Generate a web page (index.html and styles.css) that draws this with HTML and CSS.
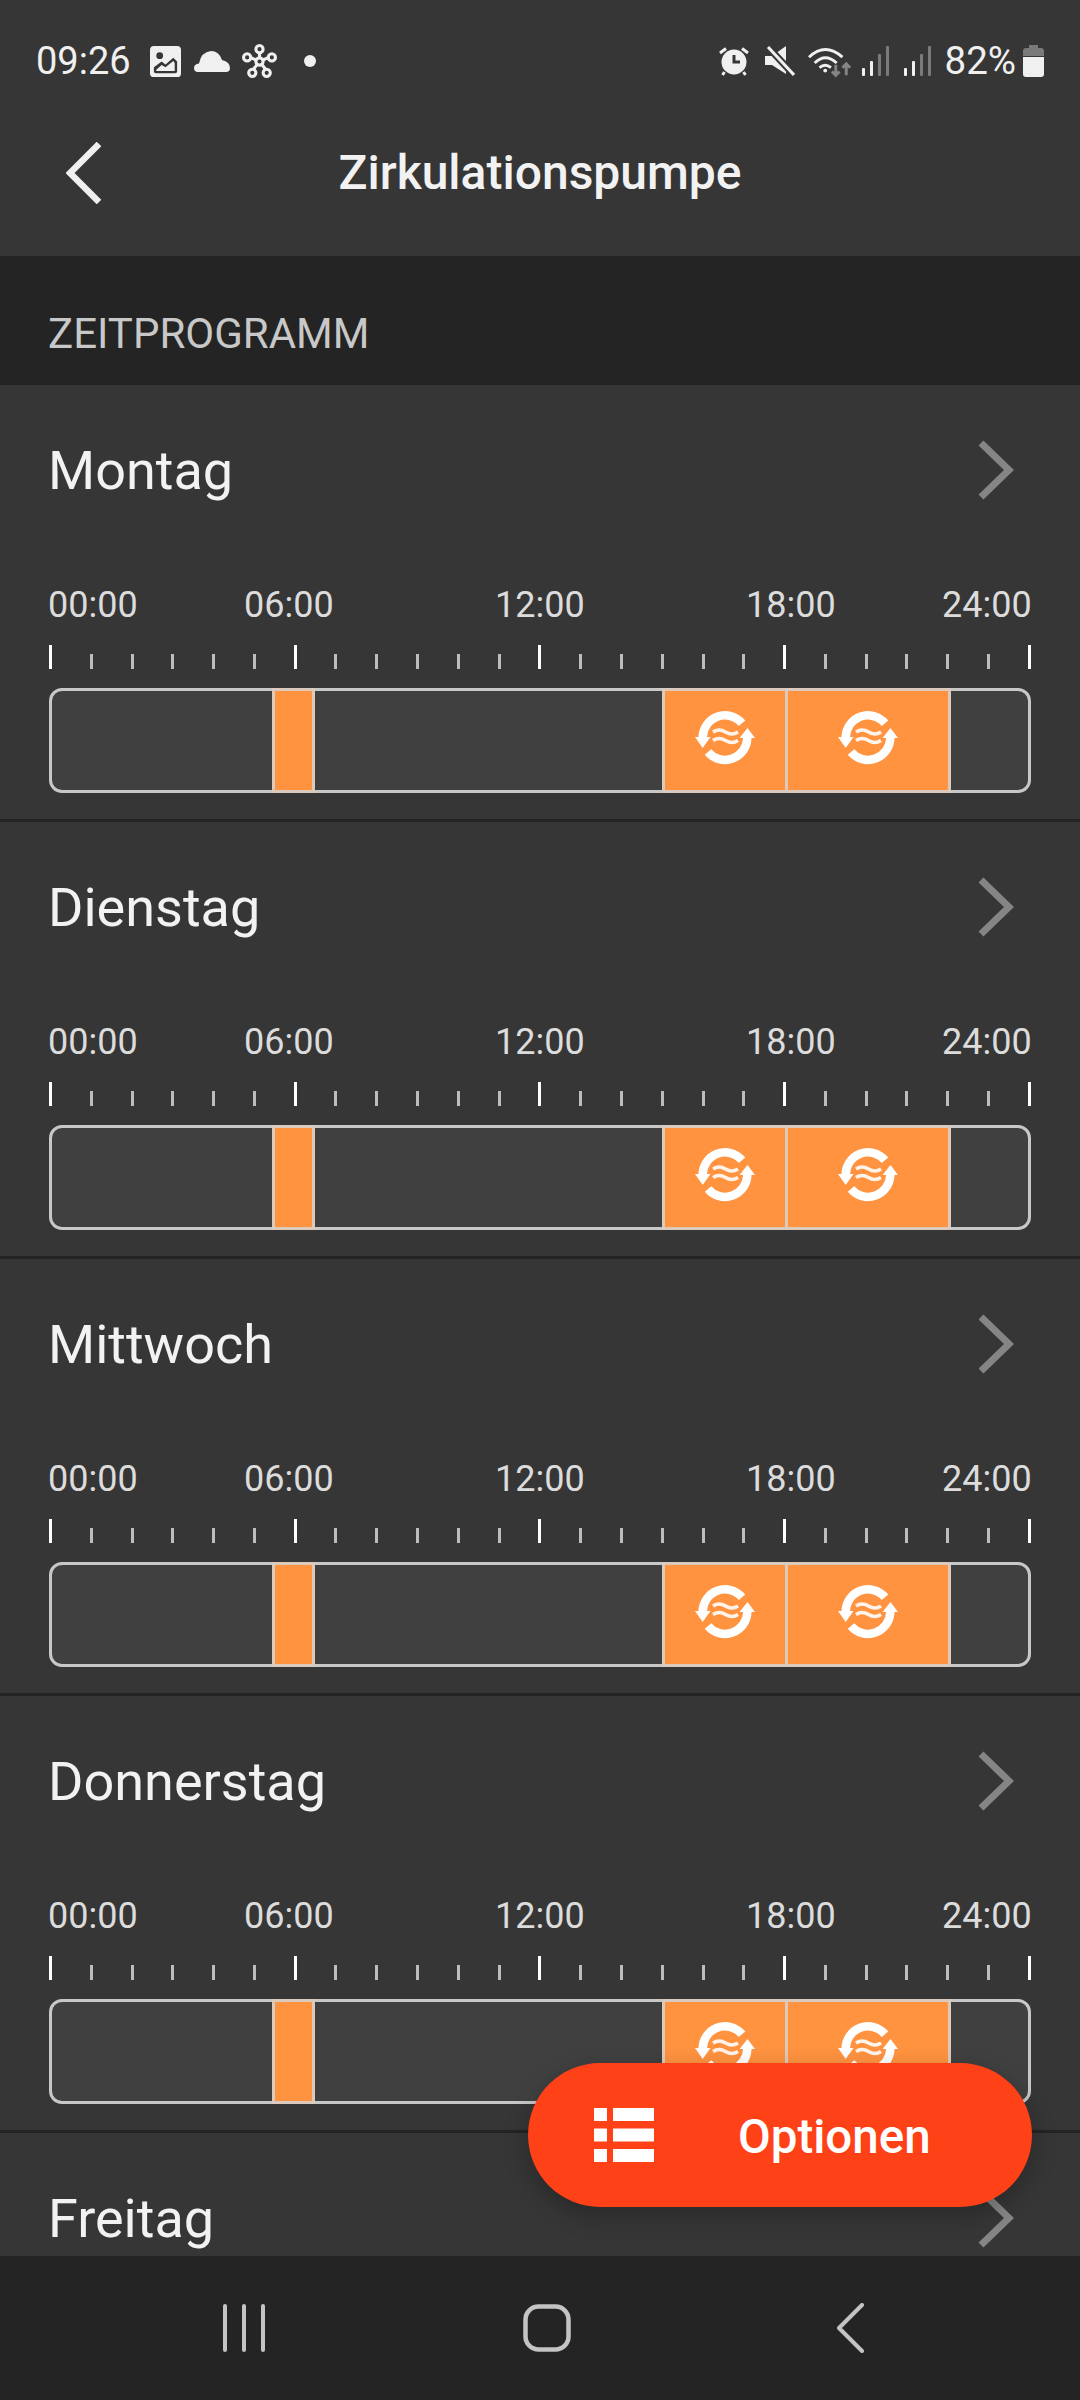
FILE: index.html
```html
<!DOCTYPE html>
<html lang="de">
<head>
<meta charset="UTF-8" />
<meta name="viewport" content="width=device-width, initial-scale=1" />
<title>Zirkulationspumpe</title>
<link rel="stylesheet" href="styles.css">
</head>
<body>

  <svg class="defs" width="0" height="0">
    <symbol id="circ" viewBox="0 0 60 54">
      <path d="M7.700 27A22.300 22.300 0 0 1 47 12.200" fill="none" stroke="#fff" stroke-width="8.500"/>
      <path d="M52.300 27A22.300 22.300 0 0 1 13 41" fill="none" stroke="#fff" stroke-width="8.500"/>
      <path d="M0 26H15.500L7.700 37Z" fill="#fff"/>
      <path d="M44.500 27H60L52.500 17Z" fill="#fff"/>
      <path d="M18 21q6-4 12.500 0t12.500 0M18 29.500q6-4 12.500 0t12.500 0" fill="none" stroke="#fff" stroke-opacity=".9" stroke-width="3.500"/>
    </symbol>
    <symbol id="chev" viewBox="0 0 36 60">
      <path d="M3 3L31 30L3 57" fill="none" stroke="#858585" stroke-width="7"/>
    </symbol>
  </svg>

  <!-- Status bar + title -->
  <header class="top">
    <div class="status">
      <div class="status-left">
        <span class="clock">09:26</span>
        <svg class="ic-pic" width="31" height="31" viewBox="0 0 32 32">
          <rect width="32" height="32" rx="4" fill="#f0f0f0"/>
          <circle cx="10" cy="10" r="3.500" fill="#363636"/>
          <path d="M4 26V22L12 16L16 19L24 12L28 16V26Q28 28 26 28H6Q4 28 4 26ZM6.500 24.500V25.800H25.500V17.500L24 15.500L16 22L12 19.500Z" fill="#363636" fill-rule="evenodd"/>
        </svg>
        <svg class="ic-cloud" width="36" height="21" viewBox="0 0 36 21">
          <path d="M4 21Q0 21 0 17Q0 13 5 12.500Q7 1 17 0Q25 0 28 9Q36 11 36 17Q36 21 32 21Z" fill="#f0f0f0"/>
        </svg>
        <svg class="ic-flower" width="35" height="35" viewBox="0 0 34 34" fill="none" stroke="#f0f0f0" stroke-width="3">
          <path d="M17 17V7M17 17L8 13M17 17L26 13M17 17L10 26M17 17L24 26" />
          <circle cx="17" cy="17" r="3.500" fill="#363636"/>
          <circle cx="17" cy="5" r="3.500" fill="#363636"/>
          <circle cx="5" cy="13" r="3.500" fill="#363636"/>
          <circle cx="29" cy="13" r="3.500" fill="#363636"/>
          <circle cx="10" cy="28" r="3.500" fill="#363636"/>
          <circle cx="24" cy="28" r="3.500" fill="#363636"/>
        </svg>
        <span class="dot"></span>
      </div>
      <div class="status-right">
        <svg class="ic-alarm" width="30" height="30" viewBox="0 0 30 30">
          <circle cx="15" cy="16" r="12.500" fill="#f0f0f0"/>
          <path d="M15 9V16H21" fill="none" stroke="#363636" stroke-width="3"/>
          <path d="M1 7L7 2.500M29 7L23 2.500M5.500 26L3.500 29M24.500 26L26.500 29" stroke="#f0f0f0" stroke-width="3" fill="none"/>
        </svg>
        <svg class="ic-mute" width="30" height="30" viewBox="0 0 30 30">
          <path d="M0 10H7L21 0V28L7 19H0Z" fill="#f0f0f0"/>
          <path d="M2 0L30 30" stroke="#363636" stroke-width="7"/>
          <path d="M3 1L29 29" stroke="#f0f0f0" stroke-width="3"/>
        </svg>
        <svg class="ic-wifi" width="44" height="33" viewBox="0 0 46 33" fill="none" stroke="#f0f0f0" stroke-width="3">
          <path d="M1 12Q18-4 36 12M7 18Q18 7 30 18M12 23Q18 18 24 23"/>
          <circle cx="18" cy="26" r="2" fill="#f0f0f0" stroke="none"/>
          <path d="M29 20V31M25 27L29 31L33 27M40 31V19M36 23L40 19L44 23" stroke="#858585"/>
        </svg>
        <svg class="ic-signal" width="27" height="30" viewBox="0 0 27 30">
          <rect x="0" y="22" width="3" height="8" rx="1" fill="#f0f0f0"/>
          <rect x="8" y="15" width="3" height="15" rx="1" fill="#f0f0f0"/>
          <rect x="16" y="8" width="3" height="22" rx="1" fill="#7a7a7a"/>
          <rect x="24" y="0" width="3" height="30" rx="1" fill="#7a7a7a"/>
        </svg>
        <svg class="ic-signal" width="27" height="30" viewBox="0 0 27 30">
          <rect x="0" y="22" width="3" height="8" rx="1" fill="#f0f0f0"/>
          <rect x="8" y="15" width="3" height="15" rx="1" fill="#f0f0f0"/>
          <rect x="16" y="8" width="3" height="22" rx="1" fill="#7a7a7a"/>
          <rect x="24" y="0" width="3" height="30" rx="1" fill="#7a7a7a"/>
        </svg>
        <span class="batt-text">82%</span>
        <svg class="ic-batt" width="21" height="32" viewBox="0 0 21 32">
          <path d="M6 0H15V3H18Q21 3 21 6V11H0V6Q0 3 3 3H6Z" fill="#7a7a7a"/>
          <path d="M0 12H21V29Q21 32 18 32H3Q0 32 0 29Z" fill="#f0f0f0"/>
        </svg>
      </div>
    </div>
    <div class="titlebar">
      <svg class="back" width="36" height="62" viewBox="0 0 36 62">
        <path d="M33 2L4 31L33 60" fill="none" stroke="#f0f0f0" stroke-width="6.500"/>
      </svg>
      <h1>Zirkulationspumpe</h1>
    </div>
  </header>

  <div class="content">
    <div class="section">ZEITPROGRAMM</div>

    <section class="day">
      <div class="day-head"><span class="day-name">Montag</span><svg class="chev"><use href="#chev"/></svg></div>
      <div class="hours"><span>00:00</span><span>06:00</span><span>12:00</span><span>18:00</span><span>24:00</span></div>
      <div class="ticks"><i class="big"></i><i></i><i></i><i></i><i></i><i></i><i class="big"></i><i></i><i></i><i></i><i></i><i></i><i class="big"></i><i></i><i></i><i></i><i></i><i></i><i class="big"></i><i></i><i></i><i></i><i></i><i></i><i class="big"></i></div>
      <div class="bar">
        <div style="width:22.54%"></div>
        <div class="seg" style="width:4.41%"></div>
        <div style="width:35.55%"></div>
        <div class="seg seg-open" style="width:12.6%"><svg class="circ"><use href="#circ"/></svg></div>
        <div class="seg" style="width:17%"><svg class="circ"><use href="#circ"/></svg></div>
      </div>
    </section>

    <section class="day">
      <div class="day-head"><span class="day-name">Dienstag</span><svg class="chev"><use href="#chev"/></svg></div>
      <div class="hours"><span>00:00</span><span>06:00</span><span>12:00</span><span>18:00</span><span>24:00</span></div>
      <div class="ticks"><i class="big"></i><i></i><i></i><i></i><i></i><i></i><i class="big"></i><i></i><i></i><i></i><i></i><i></i><i class="big"></i><i></i><i></i><i></i><i></i><i></i><i class="big"></i><i></i><i></i><i></i><i></i><i></i><i class="big"></i></div>
      <div class="bar">
        <div style="width:22.54%"></div>
        <div class="seg" style="width:4.41%"></div>
        <div style="width:35.55%"></div>
        <div class="seg seg-open" style="width:12.6%"><svg class="circ"><use href="#circ"/></svg></div>
        <div class="seg" style="width:17%"><svg class="circ"><use href="#circ"/></svg></div>
      </div>
    </section>

    <section class="day">
      <div class="day-head"><span class="day-name">Mittwoch</span><svg class="chev"><use href="#chev"/></svg></div>
      <div class="hours"><span>00:00</span><span>06:00</span><span>12:00</span><span>18:00</span><span>24:00</span></div>
      <div class="ticks"><i class="big"></i><i></i><i></i><i></i><i></i><i></i><i class="big"></i><i></i><i></i><i></i><i></i><i></i><i class="big"></i><i></i><i></i><i></i><i></i><i></i><i class="big"></i><i></i><i></i><i></i><i></i><i></i><i class="big"></i></div>
      <div class="bar">
        <div style="width:22.54%"></div>
        <div class="seg" style="width:4.41%"></div>
        <div style="width:35.55%"></div>
        <div class="seg seg-open" style="width:12.6%"><svg class="circ"><use href="#circ"/></svg></div>
        <div class="seg" style="width:17%"><svg class="circ"><use href="#circ"/></svg></div>
      </div>
    </section>

    <section class="day">
      <div class="day-head"><span class="day-name">Donnerstag</span><svg class="chev"><use href="#chev"/></svg></div>
      <div class="hours"><span>00:00</span><span>06:00</span><span>12:00</span><span>18:00</span><span>24:00</span></div>
      <div class="ticks"><i class="big"></i><i></i><i></i><i></i><i></i><i></i><i class="big"></i><i></i><i></i><i></i><i></i><i></i><i class="big"></i><i></i><i></i><i></i><i></i><i></i><i class="big"></i><i></i><i></i><i></i><i></i><i></i><i class="big"></i></div>
      <div class="bar">
        <div style="width:22.54%"></div>
        <div class="seg" style="width:4.41%"></div>
        <div style="width:35.55%"></div>
        <div class="seg seg-open" style="width:12.6%"><svg class="circ"><use href="#circ"/></svg></div>
        <div class="seg" style="width:17%"><svg class="circ"><use href="#circ"/></svg></div>
      </div>
    </section>

    <section class="day">
      <div class="day-head"><span class="day-name">Freitag</span><svg class="chev"><use href="#chev"/></svg></div>
    </section>
  </div>

  <!-- Floating button -->
  <button class="fab">
    <svg width="60" height="54" viewBox="0 0 60 54" fill="#fff">
      <rect width="13" height="13"/><rect x="19" width="41" height="13"/>
      <rect y="20.500" width="13" height="13"/><rect x="19" y="20.500" width="41" height="13"/>
      <rect y="41" width="13" height="13"/><rect x="19" y="41" width="41" height="13"/>
    </svg>
    <span class="fab-text">Optionen</span>
  </button>

  <!-- Android nav -->
  <nav class="sysnav">
    <svg width="44" height="48" viewBox="0 0 44 48" stroke="#c4c4c4" stroke-width="4" stroke-linecap="round">
      <path d="M3 2V46M22 2V46M41 2V46"/>
    </svg>
    <svg width="48" height="48" viewBox="0 0 48 48" fill="none">
      <rect x="2.500" y="2.500" width="43" height="43" rx="13" stroke="#c4c4c4" stroke-width="4.500"/>
    </svg>
    <svg width="28" height="50" viewBox="0 0 28 50" fill="none" stroke="#c4c4c4" stroke-width="4" stroke-linecap="round" stroke-linejoin="round">
      <path d="M26 2L3 25L26 48"/>
    </svg>
  </nav>

</body>
</html>
```

FILE: styles.css
```css
* {
  box-sizing: border-box;
}

html, body {
  margin: 0;
  padding: 0;
  width: 1080px;
  height: 2400px;
  overflow: hidden;
}

body {
  position: relative;
  display: flex;
  flex-direction: column;
  background: #363636;
  color: #f0f0f0;
  font-family: Roboto, "Noto Sans", sans-serif;
}

.defs {
  position: absolute;
}

/* Status bar */
.top {
  background: #363636;
}

.status {
  height: 90px;
  padding: 32px 36px 0 36px;
  display: flex;
  justify-content: space-between;
  align-items: center;
}

.status-left, .status-right {
  display: flex;
  align-items: center;
}

.clock {
  font-size: 38px;
  line-height: 40px;
  margin-right: 19px;
}

.ic-cloud {
  margin-left: 13px;
}

.ic-flower {
  margin-left: 12px;
}

.dot {
  width: 12px;
  height: 12px;
  border-radius: 50%;
  background: #f0f0f0;
  margin-left: 27px;
}

.ic-mute {
  margin-left: 16px;
}

.ic-wifi {
  margin-left: 13px;
}

.ic-signal {
  margin-left: 10px;
}

.ic-signal + .ic-signal {
  margin-left: 15px;
}

.batt-text {
  font-size: 38.500px;
  line-height: 40px;
  margin-left: 14px;
}

.ic-batt {
  margin-left: 7px;
}

/* Title */
.titlebar {
  height: 166px;
  padding: 0 66px;
  display: grid;
  grid-template-columns: 1fr auto 1fr;
  align-items: center;
}

.titlebar h1 {
  margin: 0;
  font-size: 48px;
  font-weight: 500;
  line-height: 56px;
  color: #f2f2f2;
}

.back {
  display: block;
}

.content {
  flex: 1;
  overflow: hidden;
}

.section {
  height: 129px;
  padding: 0 48px 27px;
  background: #242424;
  display: flex;
  align-items: flex-end;
  color: #c8c8c8;
  font-size: 42px;
  line-height: 48px;
}

/* Day rows */
.day {
  height: 437px;
  padding: 0 49px;
  border-bottom: 3px solid #242424;
}

.day-head {
  height: 170px;
  display: flex;
  justify-content: space-between;
  align-items: center;
  padding-right: 17px;
}

.day-name {
  margin: 2px 0 0 -1px;
  font-size: 54px;
  line-height: 64px;
  color: #f2f2f2;
}

.chev {
  width: 36px;
  height: 60px;
}

.hours {
  margin: 30px 0 0 -1px;
  height: 40px;
  display: grid;
  grid-template-columns: 196px 251px 251px 196px auto;
  font-size: 36px;
  line-height: 40px;
  color: #dcdcdc;
}

.ticks {
  margin-top: 20px;
  height: 24px;
  display: flex;
  justify-content: space-between;
  align-items: flex-end;
}

.ticks i {
  display: block;
  width: 3px;
  height: 15px;
  background: #bdbdbd;
}

.ticks i.big {
  height: 24px;
  background: #fff;
}

.bar {
  margin-top: 19px;
  height: 105px;
  display: flex;
  background: #404040;
  border: 3px solid #c8c8c8;
  border-radius: 13px;
}

.seg {
  margin: -3px 0;
  background: #ff9340;
  border: 3px solid #dccbbc;
  display: flex;
  justify-content: center;
  align-items: center;
}

.seg-open {
  border-right: 0;
}

.circ {
  width: 60px;
  height: 54px;
  margin-bottom: 5px;
}

/* Floating button */
.fab {
  position: absolute;
  right: 48px;
  bottom: 193px;
  width: 504px;
  height: 144px;
  padding: 0 0 0 66px;
  display: flex;
  align-items: center;
  gap: 84px;
  border: 0;
  border-radius: 72px;
  background: #ff4118;
  color: #fff;
  font-family: Roboto, "Noto Sans", sans-serif;
  font-size: 47.500px;
  font-weight: 500;
  box-shadow: 0 8px 24px rgba(0, 0, 0, 0.25);
}

.fab-text {
  margin-top: 3px;
}

/* System nav */
.sysnav {
  height: 144px;
  flex: none;
  background: #242424;
  display: grid;
  grid-template-columns: 222px 44px 257px 48px 265px 28px;
  align-items: center;
}

.sysnav svg:nth-child(1) {
  grid-column: 2;
}

.sysnav svg:nth-child(2) {
  grid-column: 4;
}

.sysnav svg:nth-child(3) {
  grid-column: 6;
}
```
